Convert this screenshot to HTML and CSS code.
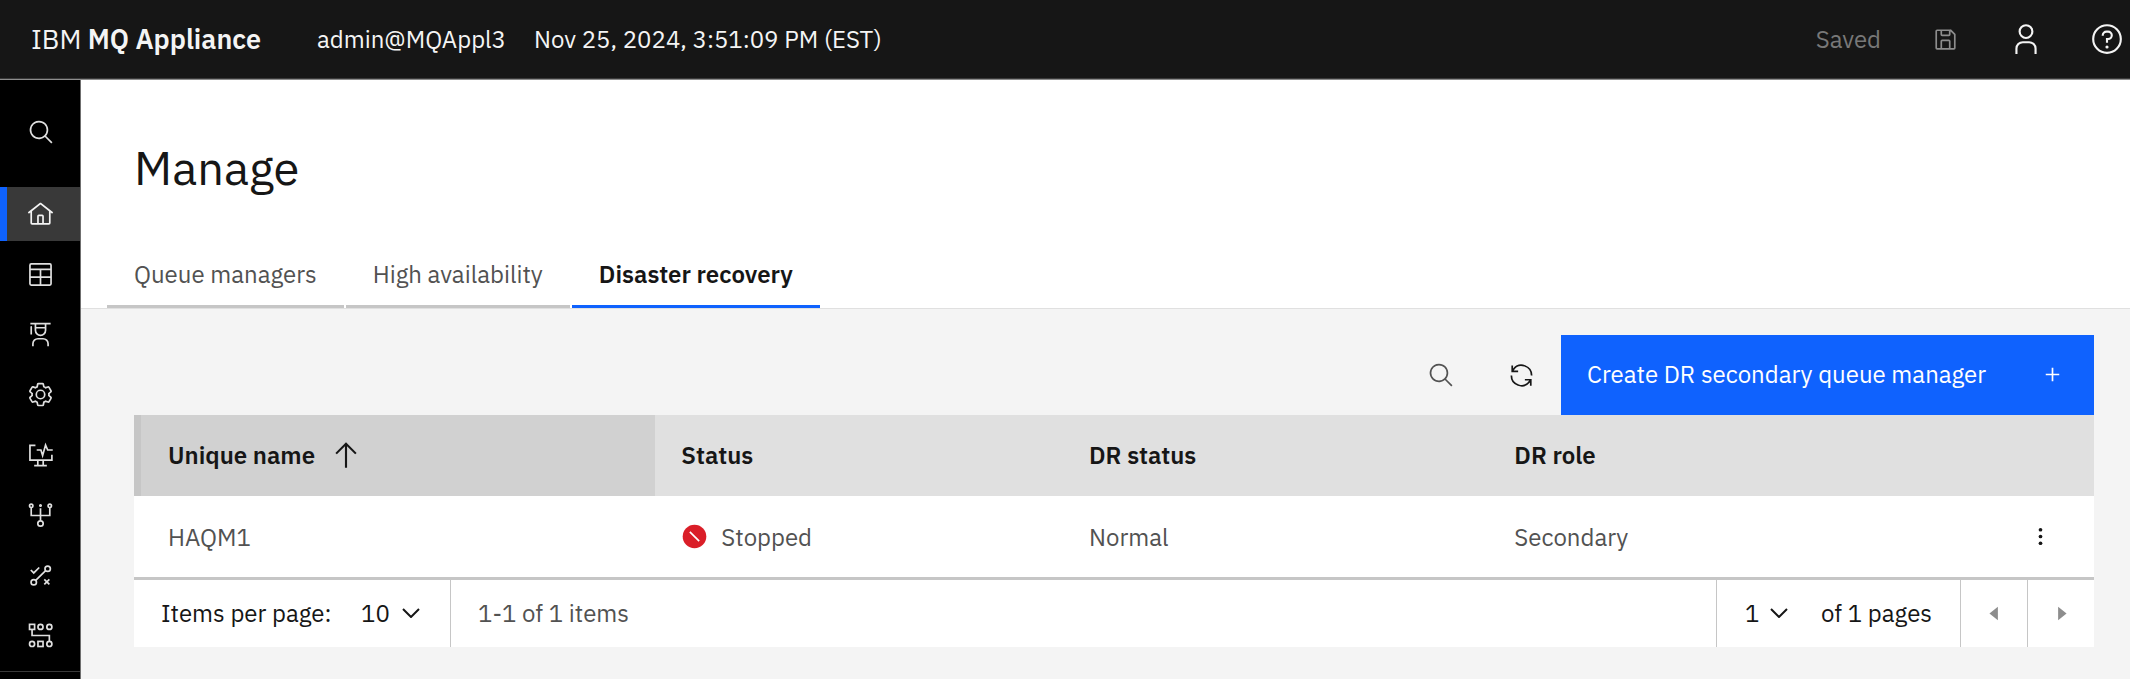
FILE: index.html
```html
<!DOCTYPE html>
<html lang="en">
<head>
<meta charset="utf-8">
<meta name="viewport" content="width=device-width, initial-scale=1">
<title>IBM MQ Appliance</title>
<link rel="stylesheet" href="styles.css">
</head>
<body>
<header class="topbar">
  <a class="brand" href="#">IBM <strong>MQ Appliance</strong></a>
  <span class="host">admin@MQAppl3</span>
  <time class="clock" datetime="2024-11-25T15:51:09-05:00">Nov 25, 2024, 3:51:09 PM (EST)</time>
  <div class="topbar-actions">
    <span class="saved">Saved</span>
    <button class="top-button" type="button" aria-label="Save" disabled>
      <svg class="icon" viewBox="0 0 32 32"><path d="M27.71,9.29l-5-5A1,1,0,0,0,22,4H6A2,2,0,0,0,4,6V26a2,2,0,0,0,2,2H26a2,2,0,0,0,2-2V10A1,1,0,0,0,27.71,9.29ZM12,6h8v4H12Zm8,20H12V18h8Zm2,0V18a2,2,0,0,0-2-2H12a2,2,0,0,0-2,2v8H6V6h4v4a2,2,0,0,0,2,2h8a2,2,0,0,0,2-2V6.41l4,4V26Z"/></svg>
    </button>
    <button class="top-button" type="button" aria-label="User">
      <svg class="icon icon-large" viewBox="0 0 32 32"><path d="M16 4a5 5 0 1 1-5 5 5 5 0 0 1 5-5m0-2a7 7 0 1 0 7 7 7 7 0 0 0-7-7ZM26 30H24V25a5 5 0 0 0-5-5H13a5 5 0 0 0-5 5v5H6V25a7 7 0 0 1 7-7h6a7 7 0 0 1 7 7Z"/></svg>
    </button>
    <button class="top-button" type="button" aria-label="Help">
      <svg class="icon icon-large" viewBox="0 0 32 32"><path d="M16 2a14 14 0 1 0 14 14A14 14 0 0 0 16 2Zm0 26a12 12 0 1 1 12-12 12 12 0 0 1-12 12Z"/><circle cx="16" cy="23.500" r="1.500"/><path d="M17 8h-1.500A4.490 4.490 0 0 0 11 12.500V13h2v-.5A2.500 2.500 0 0 1 15.500 10H17a2.500 2.500 0 0 1 0 5H15v4.500h2V17a4.500 4.500 0 0 0 0-9Z"/></svg>
    </button>
  </div>
</header>
<div class="shell">
  <aside class="sidebar">
    <button class="side-search" type="button" aria-label="Search">
      <svg class="icon" viewBox="0 0 32 32"><path d="M29 27.586l-7.552-7.552a11.018 11.018 0 1 0-1.414 1.414L27.586 29ZM4 13a9 9 0 1 1 9 9 9.010 9.010 0 0 1-9-9Z"/></svg>
    </button>
    <nav class="side-nav" aria-label="Main">
      <a class="side-link side-link-active" href="#" aria-label="Home" aria-current="page">
        <svg class="icon" viewBox="0 0 32 32"><path d="M16.6123,2.2138a1.01,1.01,0,0,0-1.2427,0L1,13.4194l1.2427,1.5717L4,13.6208V26a2.0041,2.0041,0,0,0,2,2H26a2.0037,2.0037,0,0,0,2-2V13.63L29.7573,15,31,13.4282ZM18,26H14V18h4Zm2,0V18a2.0023,2.0023,0,0,0-2-2H14a2.002,2.002,0,0,0-2,2v8H6V12.0615l10-7.79,10,7.8005V26Z"/></svg>
      </a>
      <a class="side-link" href="#" aria-label="Manage">
        <svg class="icon icon-stroke" viewBox="0 0 32 32"><rect x="3.500" y="3.500" width="25" height="25" rx="1.500"/><path d="M3.500 10h25M3.500 19h25M16 10v18.500"/></svg>
      </a>
      <a class="side-link" href="#" aria-label="Learn">
        <svg class="icon" viewBox="0 0 32 32"><path d="M26,30H24V27a5,5,0,0,0-5-5H13a5,5,0,0,0-5,5v3H6V27a7,7,0,0,1,7-7h6a7,7,0,0,1,7,7ZM5,6A1,1,0,0,0,4,7v9H6V7A1,1,0,0,0,5,6ZM4,2V4H9v7a7,7,0,0,0,14,0V4h5V2Zm7,2H21V7H11Zm5,12a5,5,0,0,1-5-5V9H21v2A5,5,0,0,1,16,16Z"/></svg>
      </a>
      <a class="side-link" href="#" aria-label="Settings">
        <svg class="icon" viewBox="0 0 32 32"><path d="M27,16.76c0-.25,0-.5,0-.76s0-.51,0-.77l1.92-1.68A2,2,0,0,0,29.3,11L26.94,7a2,2,0,0,0-1.73-1,2,2,0,0,0-.64.1l-2.43.82a11.35,11.35,0,0,0-1.31-.75l-.51-2.52a2,2,0,0,0-2-1.61H13.64a2,2,0,0,0-2,1.61l-.51,2.52a11.48,11.48,0,0,0-1.32.75L7.43,6.06A2,2,0,0,0,6.79,6,2,2,0,0,0,5.06,7L2.7,11a2,2,0,0,0,.41,2.51L5,15.24c0,.25,0,.5,0,.76s0,.51,0,.77L3.11,18.45A2,2,0,0,0,2.7,21L5.06,25a2,2,0,0,0,1.73,1,2,2,0,0,0,.64-.1l2.43-.82a11.35,11.35,0,0,0,1.31.75l.51,2.52a2,2,0,0,0,2,1.61h4.72a2,2,0,0,0,2-1.61l.51-2.52a11.48,11.48,0,0,0,1.32-.75l2.42.82a2,2,0,0,0,.64.1,2,2,0,0,0,1.73-1L29.3,21a2,2,0,0,0-.41-2.51ZM25.21,24l-3.43-1.16a8.86,8.86,0,0,1-2.71,1.57L18.36,28H13.64l-.71-3.55a9.36,9.36,0,0,1-2.7-1.57L6.79,24,4.43,20l2.72-2.4a8.9,8.9,0,0,1,0-3.13L4.43,12,6.79,8l3.43,1.16a8.86,8.86,0,0,1,2.71-1.57L13.64,4h4.72l.71,3.55a9.36,9.36,0,0,1,2.7,1.57L25.21,8,27.57,12l-2.72,2.4a8.9,8.9,0,0,1,0,3.13L27.57,20Z"/><path d="M16,22a6,6,0,1,1,6-6A5.94,5.94,0,0,1,16,22Zm0-10a3.91,3.91,0,0,0-4,4,3.91,3.91,0,0,0,4,4,3.91,3.91,0,0,0,4-4A3.91,3.91,0,0,0,16,12Z"/></svg>
      </a>
      <a class="side-link" href="#" aria-label="Monitoring">
        <svg class="icon icon-stroke" viewBox="0 0 32 32"><path d="M10 4H3.500v17.500h26V15M12.800 21.500V28M19.200 21.500V28M8.500 28h15M11.500 9.500h5l2 6.500 3.500-12.500 2.500 6h6"/></svg>
      </a>
      <a class="side-link" href="#" aria-label="Network">
        <svg class="icon icon-stroke" viewBox="0 0 32 32"><circle cx="5" cy="4.500" r="2"/><circle cx="27" cy="4.500" r="2"/><path d="M5 6.500V16h22V6.500M16 7.500v14"/><circle cx="16" cy="4.200" r=".8"/><circle cx="16" cy="25.500" r="3.200"/></svg>
      </a>
      <a class="side-link" href="#" aria-label="Test">
        <svg class="icon icon-stroke" viewBox="0 0 32 32"><path d="M4.500 9.500 8 13l6.500-6.500M10.300 21.700l11.800-11.500M20.500 20.500l6 6M26.500 20.500l-6 6"/><circle cx="24.500" cy="8" r="3.200"/><circle cx="8" cy="24" r="3.200"/></svg>
      </a>
      <a class="side-link" href="#" aria-label="Topology">
        <svg class="icon icon-stroke" viewBox="0 0 32 32"><rect x="3" y="2.800" width="6" height="6"/><circle cx="16" cy="5.800" r="3"/><circle cx="26.500" cy="5.800" r="3"/><circle cx="6" cy="26" r="3"/><rect x="13" y="23" width="6" height="6"/><circle cx="26.500" cy="26" r="3"/><path d="M6 9v7h20.500v7"/></svg>
      </a>
    </nav>
  </aside>
  <main class="main">
    <div class="page-head">
      <h1 class="page-title">Manage</h1>
      <div class="tabs" role="tablist">
        <button class="tab" type="button" role="tab">Queue managers</button>
        <button class="tab" type="button" role="tab">High availability</button>
        <button class="tab tab-selected" type="button" role="tab" aria-selected="true">Disaster recovery</button>
      </div>
    </div>
    <section class="panel">
      <div class="toolbar">
        <button class="tool-button tool-search" type="button" aria-label="Search table">
          <svg class="icon" viewBox="0 0 32 32"><path d="M29 27.586l-7.552-7.552a11.018 11.018 0 1 0-1.414 1.414L27.586 29ZM4 13a9 9 0 1 1 9 9 9.010 9.010 0 0 1-9-9Z"/></svg>
        </button>
        <button class="tool-button" type="button" aria-label="Refresh">
          <svg class="icon" viewBox="0 0 32 32"><path d="M12 10H6.780A11 11 0 0 1 27 16h2A13 13 0 0 0 6 7.680V4H4v8h8ZM20 22h5.220A11 11 0 0 1 5 16H3a13 13 0 0 0 23 8.320V28h2V20H20Z"/></svg>
        </button>
        <button class="create-button" type="button">Create DR secondary queue manager
          <svg class="icon" viewBox="0 0 32 32"><path d="M17 15V8h-2v7H8v2h7v7h2v-7h7v-2Z"/></svg>
        </button>
      </div>
      <table class="grid">
        <colgroup><col class="col-name"><col class="col-status"><col class="col-dr"><col class="col-role"><col class="col-menu"></colgroup>
        <thead>
          <tr>
            <th class="sorted" scope="col" aria-sort="ascending"><button class="sort-button" type="button">Unique name
              <svg class="icon icon-large" viewBox="0 0 32 32"><path d="M16 4 6 14l1.410 1.410L15 7.830V28h2V7.830l7.590 7.580L26 14Z"/></svg></button></th>
            <th scope="col">Status</th>
            <th scope="col">DR status</th>
            <th scope="col">DR role</th>
            <th scope="col" aria-label="Actions"></th>
          </tr>
        </thead>
        <tbody>
          <tr>
            <td>HAQM1</td>
            <td><span class="status"><svg class="icon" viewBox="0 0 32 32"><circle class="status-dot" cx="16" cy="16" r="14"/><path class="status-bar" d="M10.500 10.500l11 11"/></svg>Stopped</span></td>
            <td>Normal</td>
            <td>Secondary</td>
            <td class="menu-cell"><button class="menu-button" type="button" aria-label="Options"><svg class="icon" viewBox="0 0 32 32"><circle cx="16" cy="8" r="2.200"/><circle cx="16" cy="16" r="2.200"/><circle cx="16" cy="24" r="2.200"/></svg></button></td>
          </tr>
        </tbody>
      </table>
      <div class="pagination">
        <div class="page-size">
          <label for="page-size">Items per page:</label>
          <span class="select"><select class="select-size" id="page-size"><option>10</option></select><svg class="chevron" viewBox="0 0 18 10"><path d="M1 1l8 8 8-8"/></svg></span>
        </div>
        <span class="page-range">1-1 of 1 items</span>
        <div class="page-number">
          <span class="select"><select class="select-page" id="page-number"><option>1</option></select><svg class="chevron" viewBox="0 0 18 10"><path d="M1 1l8 8 8-8"/></svg></span>
          <label for="page-number">of 1 pages</label>
        </div>
        <button class="page-button" type="button" aria-label="Previous page" disabled><svg class="icon" viewBox="0 0 32 32"><path d="M20 24 10 16 20 8Z"/></svg></button>
        <button class="page-button" type="button" aria-label="Next page" disabled><svg class="icon" viewBox="0 0 32 32"><path d="M12 8 22 16 12 24Z"/></svg></button>
      </div>
    </section>
  </main>
</div>
</body>
</html>
```
FILE: styles.css
```css
* {
  box-sizing: border-box;
}

body {
  margin: 0;
  min-height: 100vh;
  display: flex;
  flex-direction: column;
  background: #f4f4f4;
  color: #161616;
  font: 24px/30px "IBM Plex Sans", "Noto Sans", sans-serif;
}

button,
select {
  margin: 0;
  padding: 0;
  border: 0;
  background: none;
  color: inherit;
  font: inherit;
}

.icon {
  display: block;
  flex: none;
  width: 27px;
  height: 27px;
  fill: currentColor;
}

.icon-large {
  width: 34px;
  height: 34px;
}

.icon-stroke {
  fill: none;
  stroke: currentColor;
  stroke-width: 2;
}

/* Top bar */
.topbar {
  position: relative;
  display: flex;
  align-items: center;
  height: 79px;
  padding: 0 6px 0 31px;
  background: #161616;
  border-bottom: 1px solid #393939;
  box-shadow: 0 1px #8d8d8d;
  color: #f4f4f4;
  white-space: nowrap;
}

.brand {
  color: inherit;
  text-decoration: none;
  font-size: 27px;
}

.brand strong {
  font-weight: 600;
}

.host {
  margin-left: 56px;
}

.clock {
  margin-left: 28px;
}

.topbar-actions {
  display: flex;
  align-items: center;
  gap: 47px;
  margin-left: auto;
}

.top-button:disabled {
  color: #8d8d8d;
}

.saved {
  color: #787878;
}

.top-button {
  display: grid;
  place-items: center;
  width: 34px;
  height: 34px;
}

/* Sidebar */
.shell {
  flex: 1;
  display: flex;
}

.sidebar {
  flex: none;
  display: flex;
  flex-direction: column;
  width: 81px;
  padding-bottom: 7px;
  background: #000;
  border-right: 1px solid #6f6f6f;
  color: #e0e0e0;
}

.side-search {
  display: grid;
  place-items: center;
  height: 108px;
  padding: 0 0 2px 2px;
}

.side-nav {
  flex: 1;
  display: flex;
  flex-direction: column;
  justify-content: space-between;
  padding-bottom: 8px;
  border-bottom: 1px solid #393939;
}

.side-link {
  display: grid;
  place-items: center;
  height: 54px;
  color: inherit;
}

.side-link-active {
  background: #393939;
  box-shadow: inset 7px 0 #0f62fe;
  color: #f4f4f4;
}

/* Page heading and tabs */
.main {
  flex: 1;
  min-width: 0;
}

.page-head {
  padding: 59px 26px 0;
  background: #fff;
  border-bottom: 1px solid #e0e0e0;
}

.page-title {
  margin: 0 0 47px;
  padding-left: 27px;
  font-size: 47px;
  font-weight: 400;
  line-height: 60px;
}

.tabs {
  display: flex;
  gap: 2px;
}

.tab {
  padding: 14px 27px 16px;
  border-bottom: 3px solid #c6c6c6;
  color: #525252;
  text-align: left;
}

.tab-selected {
  border-color: #0f62fe;
  color: #161616;
  font-weight: 600;
}

/* Table */
.panel {
  padding: 26px 36px 32px 53px;
}

.toolbar {
  display: flex;
  justify-content: flex-end;
}

.tool-button {
  display: grid;
  place-items: center;
  width: 80px;
  height: 80px;
}

.tool-search {
  color: #525252;
}

.create-button {
  display: flex;
  align-items: center;
  justify-content: space-between;
  width: 533px;
  height: 80px;
  padding: 0 28px 2px 26px;
  background: #0f62fe;
  color: #fff;
  white-space: nowrap;
}

.grid {
  width: 100%;
  table-layout: fixed;
  border-collapse: collapse;
  background: #fff;
}

.col-name {
  width: 26.6%;
}

.col-status {
  width: 20.8%;
}

.col-dr {
  width: 21.7%;
}

.col-menu {
  width: 107px;
}

.grid th,
.grid td {
  height: 81px;
  padding: 0 26px;
  text-align: left;
}

.grid th {
  padding-bottom: 2px;
  background: #e0e0e0;
  font-weight: 600;
}

.grid td {
  color: #525252;
}

.grid th:first-child,
.grid td:first-child {
  padding-left: 34px;
}

.grid .sorted {
  background: #d1d1d1;
  box-shadow: inset 7px 0 #c6c6c6;
}

.sort-button {
  display: flex;
  align-items: center;
  gap: 14px;
}

.status {
  display: flex;
  align-items: center;
  gap: 13px;
}

.status-dot {
  fill: #da1e28;
}

.status-bar {
  stroke: #fff;
  stroke-width: 2;
}

.grid .menu-cell {
  padding: 0;
  color: #161616;
}

.menu-button {
  display: grid;
  place-items: center;
  width: 100%;
  height: 80px;
}

/* Pagination */
.pagination {
  display: flex;
  align-items: stretch;
  height: 70px;
  background: #fff;
  border-top: 3px solid #c6c6c6;
}

.page-size,
.page-number,
.page-range {
  display: flex;
  align-items: center;
}

.page-size {
  width: 317px;
  justify-content: space-between;
  padding: 0 30px 2px 27px;
  border-right: 1px solid #c6c6c6;
}

.page-range {
  padding: 0 0 2px 27px;
  color: #525252;
}

.page-number {
  justify-content: space-between;
  width: 244px;
  margin-left: auto;
  padding: 0 28px 2px;
  border-left: 1px solid #c6c6c6;
}

.select {
  display: grid;
  align-items: center;
}

.select > * {
  grid-area: 1 / 1;
}

.select select {
  appearance: none;
}

.select-size {
  width: 59px;
}

.select-page {
  width: 43px;
}

.chevron {
  justify-self: end;
  width: 18px;
  height: 10px;
  fill: none;
  stroke: #161616;
  stroke-width: 2;
  pointer-events: none;
}

.page-button {
  display: grid;
  place-items: center;
  width: 67px;
  border-left: 1px solid #c6c6c6;
  color: #8d8d8d;
}
```
